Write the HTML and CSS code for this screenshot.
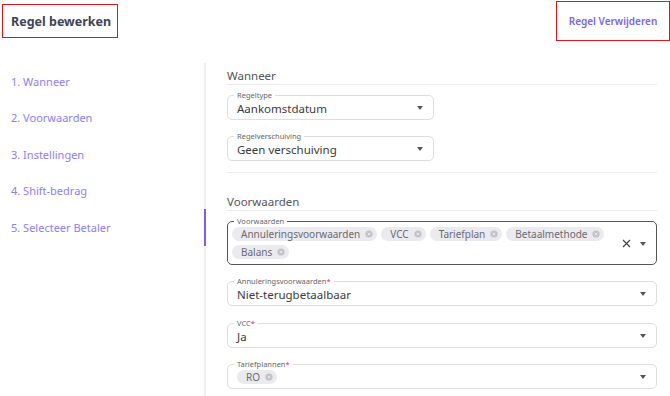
FILE: index.html
```html
<!DOCTYPE html>
<html lang="nl">
<head>
    <meta charset="UTF-8">
    <meta name="viewport" content="width=device-width, initial-scale=1.0">
    <title>Regel bewerken</title>
    <link rel="stylesheet" href="styles.css">
</head>
<body>
    <div class="header">
        <div class="title-box">Regel bewerken</div>
        <div class="delete-box"><a href="#" class="delete-link">Regel Verwijderen</a></div>
    </div>

    <div class="layout">
        <!-- Stappen -->
        <ul class="steps">
            <li>1. Wanneer</li>
            <li>2. Voorwaarden</li>
            <li>3. Instellingen</li>
            <li>4. Shift-bedrag</li>
            <li class="active">5. Selecteer Betaler</li>
        </ul>

        <div class="main">
            <!-- Wanneer -->
            <div class="section">
                <div class="section-title">Wanneer</div>
                <div class="field small">
                    <span class="label">Regeltype</span>
                    <span class="value">Aankomstdatum</span>
                    <span class="arrow"></span>
                </div>
                <div class="field small">
                    <span class="label">Regelverschuiving</span>
                    <span class="value">Geen verschuiving</span>
                    <span class="arrow"></span>
                </div>
            </div>

            <!-- Voorwaarden -->
            <div class="section last">
                <div class="section-title">Voorwaarden</div>
                <div class="field multi focused">
                    <span class="label">Voorwaarden</span>
                    <div class="chips">
                        <span class="chip">Annuleringsvoorwaarden <svg class="chip-x" viewBox="0 0 8 8"><circle cx="4" cy="4" r="3.6" fill="#c2c2c7"/><path d="M2.7 2.7L5.3 5.3M5.3 2.7L2.7 5.3" stroke="#ebebef" stroke-width="0.9"/></svg></span>
                        <span class="chip">VCC <svg class="chip-x" viewBox="0 0 8 8"><circle cx="4" cy="4" r="3.6" fill="#c2c2c7"/><path d="M2.7 2.7L5.3 5.3M5.3 2.7L2.7 5.3" stroke="#ebebef" stroke-width="0.9"/></svg></span>
                        <span class="chip">Tariefplan <svg class="chip-x" viewBox="0 0 8 8"><circle cx="4" cy="4" r="3.6" fill="#c2c2c7"/><path d="M2.7 2.7L5.3 5.3M5.3 2.7L2.7 5.3" stroke="#ebebef" stroke-width="0.9"/></svg></span>
                        <span class="chip">Betaalmethode <svg class="chip-x" viewBox="0 0 8 8"><circle cx="4" cy="4" r="3.6" fill="#c2c2c7"/><path d="M2.7 2.7L5.3 5.3M5.3 2.7L2.7 5.3" stroke="#ebebef" stroke-width="0.9"/></svg></span>
                        <span class="chip">Balans <svg class="chip-x" viewBox="0 0 8 8"><circle cx="4" cy="4" r="3.6" fill="#c2c2c7"/><path d="M2.7 2.7L5.3 5.3M5.3 2.7L2.7 5.3" stroke="#ebebef" stroke-width="0.9"/></svg></span>
                    </div>
                    <svg class="clear" width="9" height="9" viewBox="0 0 9 9"><path d="M1 1L8 8M8 1L1 8" stroke="#444" stroke-width="1.2"/></svg>
                    <span class="arrow"></span>
                </div>
                <div class="field">
                    <span class="label">Annuleringsvoorwaarden<b>*</b></span>
                    <span class="value">Niet-terugbetaalbaar</span>
                    <span class="arrow"></span>
                </div>
                <div class="field">
                    <span class="label">VCC<b>*</b></span>
                    <span class="value">Ja</span>
                    <span class="arrow"></span>
                </div>
                <div class="field">
                    <span class="label">Tariefplannen<b>*</b></span>
                    <div class="chips">
                        <span class="chip">RO <svg class="chip-x" viewBox="0 0 8 8"><circle cx="4" cy="4" r="3.6" fill="#c2c2c7"/><path d="M2.7 2.7L5.3 5.3M5.3 2.7L2.7 5.3" stroke="#ebebef" stroke-width="0.9"/></svg></span>
                    </div>
                    <span class="arrow"></span>
                </div>
            </div>
        </div>
    </div>
</body>
</html>
```

FILE: styles.css
```css
body {
    margin: 0;
    font-family: "Noto Sans", "DejaVu Sans", sans-serif;
    background: #ffffff;
    color: #333;
    height: 396px;
    overflow: hidden;
}
.header {
    display: flex;
    justify-content: space-between;
    align-items: flex-start;
    height: 63px;
}
.title-box {
    margin: 4px 0 0 2px;
    width: 106px;
    height: 32px;
    border: 1.5px solid #e0151b;
    display: flex;
    align-items: center;
    padding-left: 8px;
    font-size: 12.5px;
    font-weight: 700;
    color: #3e4452;
    white-space: nowrap;
}
.delete-box {
    margin-top: 1px;
    width: 112px;
    height: 38px;
    border: 1.5px solid #e0151b;
    display: flex;
    align-items: center;
    justify-content: center;
}
.delete-link {
    font-size: 10px;
    font-weight: 600;
    color: #7b63f5;
    text-decoration: none;
    white-space: nowrap;
}
.layout {
    display: flex;
    height: 333px;
}
.steps {
    list-style: none;
    margin: 0;
    padding: 0;
    width: 204px;
    border-right: 2px solid #f0f0f0;
    flex-shrink: 0;
}
.steps li {
    height: 36.5px;
    display: flex;
    align-items: center;
    padding-left: 11px;
    font-size: 11px;
    color: #8c7ef7;
    margin-right: -2px;
    border-right: 2px solid transparent;
}
.steps li.active {
    border-right-color: #7b5cff;
}
.main {
    flex: 1;
    padding: 6px 13px 0 21px;
}
.section {
    border-bottom: 1px solid #ececec;
    padding-bottom: 11px;
    margin-bottom: 22px;
}
.section.last {
    border-bottom: none;
    padding-bottom: 0;
    margin-bottom: 0;
}
.section-title {
    font-size: 11.5px;
    line-height: 14px;
    color: #555;
    padding-bottom: 1px;
    border-bottom: 1px solid #ececec;
    margin-bottom: 10px;
}
.field {
    position: relative;
    display: flex;
    align-items: center;
    height: 25px;
    box-sizing: border-box;
    border: 1px solid #dedede;
    border-radius: 5px;
    padding: 0 10px 0 9px;
    margin-bottom: 16.5px;
}
.field.small {
    width: 207px;
    margin-bottom: 16px;
}
.field.multi {
    height: 44px;
    padding-left: 4px;
    margin-bottom: 16px;
}
.field.focused {
    border-color: #555;
}
.section .field:last-child {
    margin-bottom: 0;
}
.label {
    position: absolute;
    top: -5px;
    left: 6px;
    padding: 0 3px;
    background: #ffffff;
    font-size: 7.5px;
    line-height: 9px;
    color: #666;
}
.label b {
    color: #e0245e;
    font-weight: 400;
}
.value {
    flex: 1;
    font-size: 11.5px;
    color: #3a3a3a;
    padding-top: 2px;
}
.arrow {
    width: 0;
    height: 0;
    border-left: 3.5px solid transparent;
    border-right: 3.5px solid transparent;
    border-top: 4px solid #555;
    margin-top: 1px;
}
.chips {
    flex: 1;
    display: flex;
    flex-wrap: wrap;
    gap: 4px;
    padding-right: 14px;
}
.chip {
    display: inline-flex;
    align-items: center;
    height: 14px;
    padding: 0 4px 0 9px;
    border-radius: 7px;
    background: #ebebef;
    font-size: 10px;
    color: #6a6a72;
    gap: 5px;
}
.chip-x {
    width: 8px;
    height: 8px;
}
.clear {
    margin-right: 9px;
}
```
